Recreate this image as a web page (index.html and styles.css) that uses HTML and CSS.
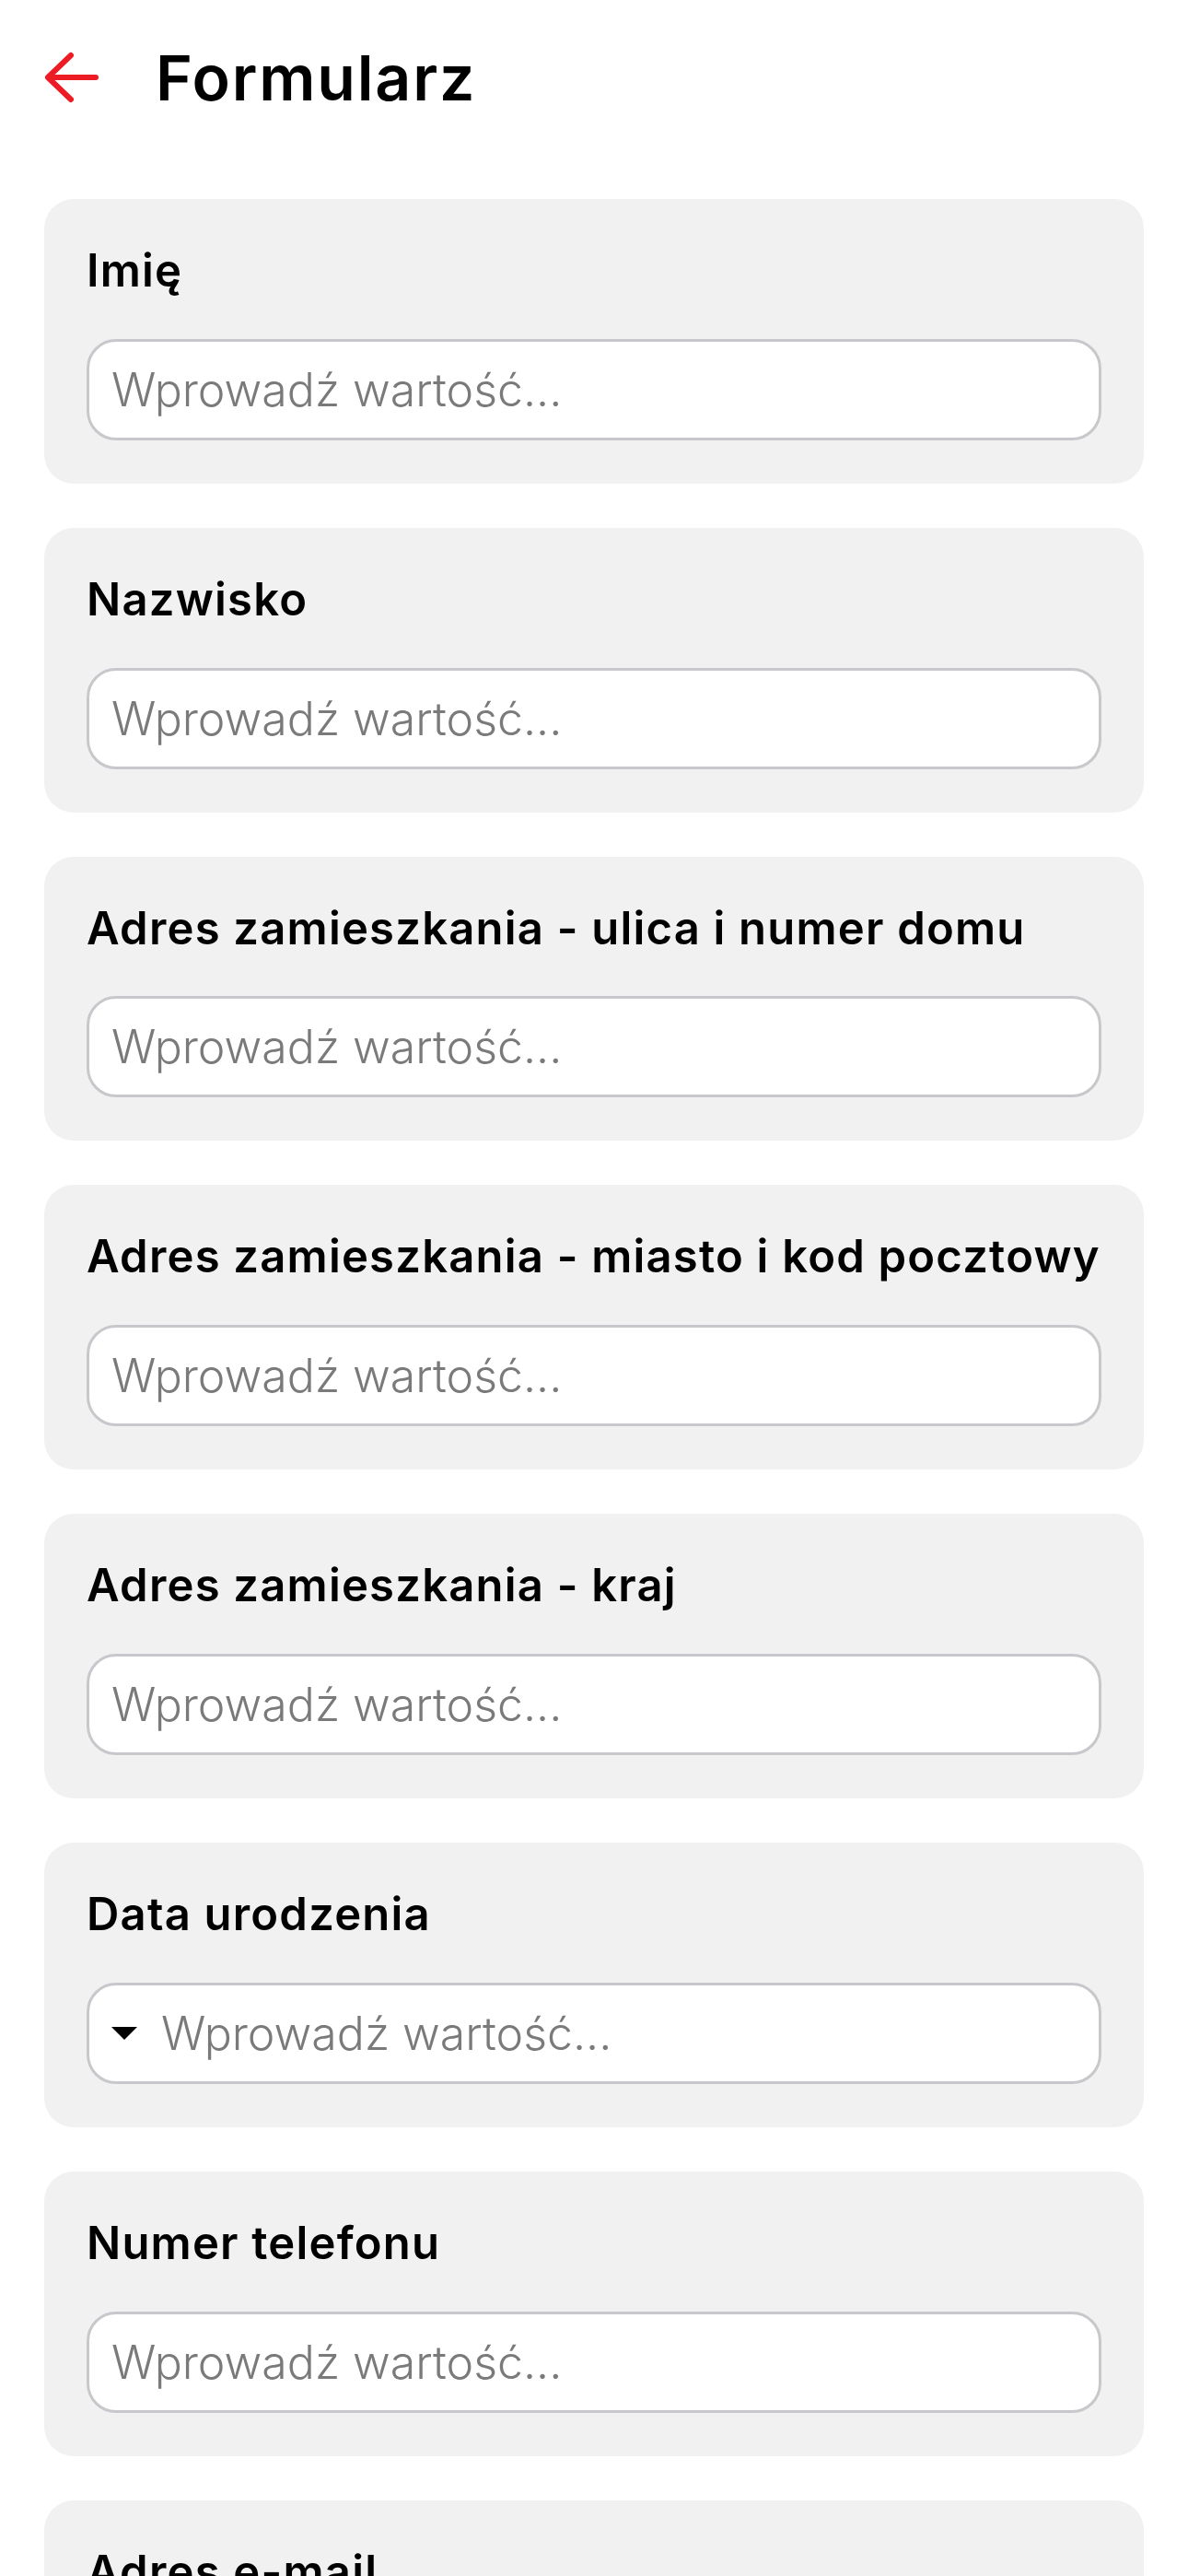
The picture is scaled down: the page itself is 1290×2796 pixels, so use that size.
FILE: index.html
```html
<!DOCTYPE html>
<html lang="pl">

<head>
    <meta charset="UTF-8">
    <meta name="viewport" content="width=device-width, initial-scale=1.0">
    <title>Formularz</title>
    <link rel="stylesheet" href="styles.css">
</head>

<body>
    <header class="top-bar">
        <a class="back-button" href="#">
            <svg width="60" height="56" viewBox="0 0 60 56">
                <path d="M4 28 H56 M4 28 L29 4 M4 28 L29 52" fill="none" stroke="#ed1c24" stroke-width="6"
                    stroke-linecap="round" stroke-linejoin="round" />
            </svg>
        </a>
        <h1 class="page-title">Formularz</h1>
    </header>

    <main class="form-list">
        <div class="form-card">
            <label class="form-label">Imię</label>
            <div class="form-field">
                <input type="text" placeholder="Wprowadź wartość...">
            </div>
        </div>

        <div class="form-card">
            <label class="form-label">Nazwisko</label>
            <div class="form-field">
                <input type="text" placeholder="Wprowadź wartość...">
            </div>
        </div>

        <div class="form-card">
            <label class="form-label">Adres zamieszkania - ulica i numer domu</label>
            <div class="form-field">
                <input type="text" placeholder="Wprowadź wartość...">
            </div>
        </div>

        <div class="form-card">
            <label class="form-label">Adres zamieszkania - miasto i kod pocztowy</label>
            <div class="form-field">
                <input type="text" placeholder="Wprowadź wartość...">
            </div>
        </div>

        <div class="form-card">
            <label class="form-label">Adres zamieszkania - kraj</label>
            <div class="form-field">
                <input type="text" placeholder="Wprowadź wartość...">
            </div>
        </div>

        <div class="form-card">
            <label class="form-label">Data urodzenia</label>
            <div class="form-field">
                <svg class="dropdown-icon" width="28" height="14" viewBox="0 0 28 14">
                    <path d="M0 0 H28 L14 14 Z" fill="#000000" />
                </svg>
                <input type="text" placeholder="Wprowadź wartość...">
            </div>
        </div>

        <div class="form-card">
            <label class="form-label">Numer telefonu</label>
            <div class="form-field">
                <input type="tel" placeholder="Wprowadź wartość...">
            </div>
        </div>

        <div class="form-card">
            <label class="form-label">Adres e-mail</label>
            <div class="form-field">
                <input type="email" placeholder="Wprowadź wartość...">
            </div>
        </div>
    </main>
</body>

</html>
```

FILE: styles.css
```css
body {
    font-family: 'Inter', 'Noto Sans', sans-serif;
    background-color: #FFFFFF;
    color: #000000;
    margin: 0;
}

/* Header with back arrow */
.top-bar {
    display: flex;
    align-items: center;
    height: 168px;
    padding-left: 48px;
    box-sizing: border-box;
}

.back-button {
    display: flex;
    width: 60px;
    height: 56px;
    margin-right: 61px;
}

.page-title {
    font-size: 68px;
    font-weight: 600;
    letter-spacing: 1.8px;
    margin: 0;
    line-height: 1;
}

/* Cards */
.form-list {
    display: flex;
    flex-direction: column;
    gap: 48px;
    padding: 48px 48px 60px 48px;
}

.form-card {
    display: flex;
    flex-direction: column;
    background-color: #f1f1f1;
    border-radius: 32px;
    padding: 49px 46px 47px 46px;
}

.form-label {
    font-size: 49px;
    font-weight: 600;
    letter-spacing: 1.2px;
    line-height: 1.2;
    white-space: nowrap;
    margin-bottom: 44px;
}

.form-field {
    display: flex;
    align-items: center;
    height: 110px;
    box-sizing: border-box;
    border: 3px solid #c8c8cc;
    border-radius: 32px;
    background-color: #FFFFFF;
    padding: 0 24px;
}

.dropdown-icon {
    flex: none;
    margin-right: 26px;
}

.form-field input {
    flex: 1;
    min-width: 0;
    border: none;
    outline: none;
    background: transparent;
    padding: 0;
    font-family: inherit;
    font-size: 50px;
    font-weight: 300;
    color: #000000;
}

.form-field input::placeholder {
    color: #7a7a7a;
}
```
